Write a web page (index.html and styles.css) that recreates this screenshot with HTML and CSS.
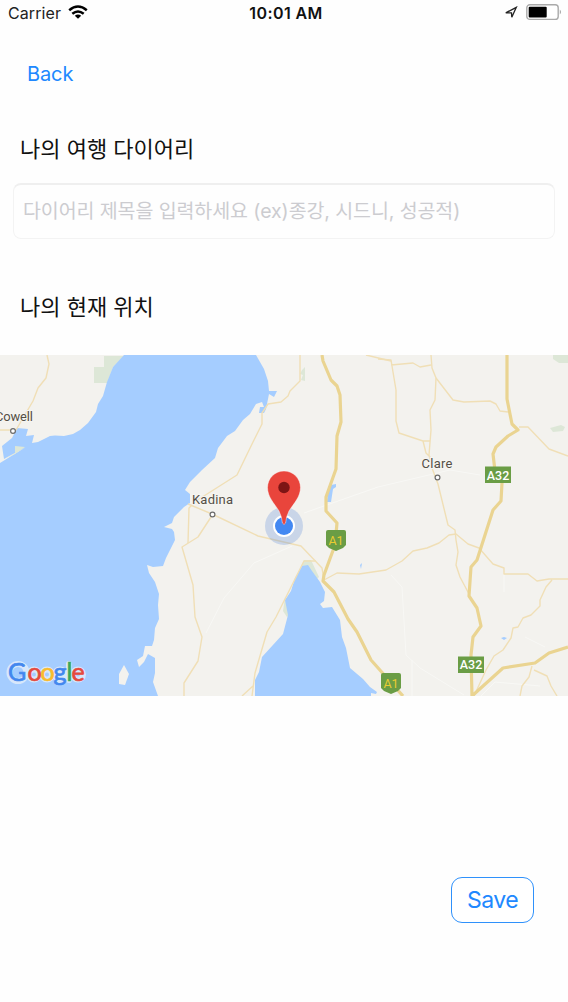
FILE: index.html
```html
<!DOCTYPE html>
<html lang="ko">
<head>
<meta charset="utf-8">
<title>나의 여행 다이어리</title>
<link rel="stylesheet" href="styles.css">
</head>
<body>
<main class="screen">
  <header class="status">
    <div class="status-left">
      <span class="carrier">Carrier</span>
      <svg class="wifi" viewBox="0 0 20 14" width="20" height="14">
        <g fill="none" stroke="#000" stroke-width="2.5">
          <path d="M1.2 5.2Q10-2.2 18.8 5.2"/>
          <path d="M4.300 8.800Q10 4.100 15.700 8.800"/>
        </g>
        <path d="M6.8 10.7Q10 8.200 13.200 10.700L10 13.700Z"/>
      </svg>
    </div>
    <span class="time">10:01 AM</span>
    <div class="status-right">
      <svg viewBox="0 0 14 14" width="14" height="14"><path d="M1.800 6.800 12.300 1.300 7.800 11.300 7.500 6.900Z" fill="none" stroke="#222" stroke-width="1.300"/></svg>
      <svg viewBox="0 0 36 17" width="36" height="17">
        <rect x=".8" y=".8" width="31.4" height="14.6" rx="3" fill="#fff" stroke="#aaa" stroke-width="1.4"/>
        <rect x="2.7" y="2.8" width="18" height="10.7" rx="1" fill="#000"/>
        <path d="M33.8 5.5Q36 8 33.8 10.5Z" fill="#999"/>
      </svg>
    </div>
  </header>
  <nav class="nav"><a class="back">Back</a></nav>
  <h1 class="label">나의 여행 다이어리</h1>
  <div class="field"><span class="placeholder">다이어리 제목을 입력하세요 (ex)종강, 시드니, 성공적)</span></div>
  <h2 class="label label-location">나의 현재 위치</h2>
  <svg class="map" viewBox="0 355 568 341" width="568" height="341">
    <rect class="land" y="355" width="568" height="341"/>
    <g class="park">
      <path d="M104 356H124L113 367 107 383H94V367H104Z"/>
      <path d="M302 370 305 367V381L301 380 303 375 300 374Z"/>
      <path d="M553 355H568V363H559L553 359Z"/>
      <path d="M550 428 561 425 565 427 563 431 553 432Z"/>
      <path d="M301 566 304 560 311 560 319 577 317 579 309 570Z"/>
      <path d="M285 597 290 614 287 617 283 611Z"/>
    </g>
    <g class="water">
      <path d="M124 355 113 367 107 382 103 396 98 404 96 412 88 423 80 430 73 434 64 436 55 435.500 50 436 38 442 32 443 34 435 26 436 28 429 17 428 12 438 2 446 4 459 15 453 26 447 0 463V696H158L153 682 155 673V658L148 654 144 662 139 667 137 660 143 656 145 646H152L154 640 155 628 159 619 158 605 159 594 155 582 149 573 147 565 153 567 163 566 166 558 170 550 175 540 174 532 172 529 164 527 172 523 174 517 184 507 190 503V494L185 490 190 482 202 470 215 458 218 448 227 436 235 431 243 420 250 414 256 404 262 402 264 407 260 407 259 413 264 413 266 409 269 394 274 397 277 391 269 391 268 381 264 369 256 355Z"/>
      <path d="M302 566 308 565 312 571 320 582 325 592 324 601 320 604 323 608 332 607 340 620 342 637 346 648 350 668 363 679 370 687 377 692 376 694 371 693V696H255V680L259 672 262 657 283 634 288 615 285 600 291 591 295 578Z"/>
      <path d="M331 485 336 484 336 487 333 489 331 502 327 502 328 492Z"/>
      <path d="M360 565 362 563 361 569Z"/>
      <path d="M501 638 504 637 507 638 504 640Z"/>
    </g>
    <path class="park" d="M15 446 25 447 15 454 4 459 15 453Z"/>
    <path class="land" d="M124 665 129 674 125 685 119 684V674Z"/>
    <g class="trail">
      <path d="M206 633 224 598 254 563 292 546M304 513 378 487 450 470 480 475M391 575 402 587 406 655 420 668 464 695M412 660V696M481 696 495 682 540 686M504 572V592M525 637 545 647"/>
    </g>
    <g class="road">
      <path d="M47 355 49 364 46 378 38 388 33 401 16 430H0"/>
      <path d="M300 355V381L290 391 288 396 281 402 268 404 262 413V424L253 442 237 475 196 501 189 508 188 543"/>
      <path d="M188 504 212 514 258 536 301 546 322 568 324 580M213 514 198 537 182 547 193 585 195 617 202 637 198 661 184 683V696"/>
      <path d="M316 561H304L289 591 276 617 267 632 255 673 252 696M253 686 242 696M366 355 391 361"/>
      <path d="M378 359 391 360 392 366 396 390V421L399 433 423 441 426 453 431 458M391 365 413 363 420 367 431 365M423 441H430M431 355 432 368 436 378 435 400 430 410 431 430 429 455 432 468 438 484 448 525 455 530 456 540 458 552 456 565 460 577 469 594"/>
      <path d="M436 378 453 400 464 402 490 401 496 404 500 411 508 412M519 427H528L549 449 568 456"/>
      <path d="M324 580 337 573 359 574 386 570 402 561 413 551 427 548 439 543 449 535 456 534 468 544 479 548 493 564 504 568V574H528L537 581 549 579 555 579 568 579M552 580 546 587 540 600V606L531 615 523 618 518 627 513 628 511 638 503 650 494 656 486 670 474 696M532 666 529 677 522 686 520 696M534 670 547 676 551 686 557 696"/>
    </g>
    <g class="highway">
      <path d="M322 355 323 361 331 380 337 386 340 395 341 422 337 436 336 469 326 497 326 511 337 523 335 545 324 575 323 581 334 592 348 619 357 632 371 660 403 696"/>
      <path d="M507 355V399L512 424 518 430 508 436 496 447 493 454 495 471 502 483 501 501 493 510 477 560 471 567 469 596 477 608 481 626 473 637 471 655 472 696 503 668 535 663 549 653 568 647"/>
    </g>
    <g class="shield">
      <rect x="485" y="466.500" width="26" height="16.500"/>
      <rect x="458" y="656.500" width="26" height="16.500"/>
      <path d="M328 530H344Q346 530 346 532V545L343 548 336 551 329 548 326 545V532Q326 530 328 530Z"/>
      <path d="M383 673H399Q401 673 401 675V688L398 691 391 694 384 691 381 688V675Q381 673 383 673Z"/>
    </g>
    <g class="shield-white"><text x="498" y="479.500">A32</text><text x="471" y="669">A32</text></g>
    <g class="shield-yellow"><text x="336" y="544.500">A1</text><text x="391" y="687.500">A1</text></g>
    <g class="town-dot"><circle cx="13" cy="431" r="2.400"/><circle cx="212.500" cy="514.500" r="2.400"/><circle cx="437.500" cy="477.500" r="2.400"/></g>
    <g class="town">
      <text x="-5" y="420.500" textLength="38">Cowell</text>
      <text x="192" y="504" textLength="41">Kadina</text>
      <text x="421.500" y="467.500" textLength="31">Clare</text>
    </g>
    <circle cx="284" cy="526" r="19" fill="#4b80d8" fill-opacity=".25"/>
    <circle cx="284" cy="526" r="11" fill="#fff"/>
    <circle cx="284" cy="526" r="9" fill="#4388f2"/>
    <path d="M284 471A16.500 16.500 0 0 0 267.500 487.500C267.500 497 274 503 279 511Q282 517 282.400 523Q284 526 285.600 523Q286 517 289 511C294 503 300.500 497 300.500 487.500A16.500 16.500 0 0 0 284 471Z" fill="#e9453c" stroke="#fff" stroke-opacity=".65" stroke-width=".7"/>
    <circle cx="284" cy="487.500" r="5.700" fill="#7d1515"/>
    <g class="google-halo"><circle cx="18" cy="672.500" r="8.500"/><circle cx="34" cy="674.500" r="5"/><circle cx="47" cy="674.500" r="5"/><path d="M60 674V680M69 664V680"/><circle cx="60" cy="674.500" r="5"/><circle cx="78" cy="674.500" r="5"/></g>
    <text class="google" x="8 27.500 40.500 53.500 66.600 71.500" y="681"><tspan class="g-blue">G</tspan><tspan class="g-red">o</tspan><tspan class="g-yellow">o</tspan><tspan class="g-blue">g</tspan><tspan class="g-green">l</tspan><tspan class="g-red">e</tspan></text>
  </svg>
  <footer class="actions"><button class="save">Save</button></footer>
</main>
</body>
</html>
```

FILE: styles.css
```css
* { box-sizing: border-box; }
body { margin: 0; background: #fff; font-family: Inter, "Noto Sans CJK KR", sans-serif; }
.screen { display: flex; flex-direction: column; width: 568px; height: 1002px; overflow: hidden; background: #fefefe; }
.status { display: grid; grid-template-columns: 1fr auto 1fr; align-items: center; height: 26px; padding: 0 6px 0 8px; font-size: 16px; line-height: 26px; color: #222; }
.status-left { display: flex; align-items: center; gap: 7px; }
.wifi { margin-top: -2px; }
.carrier { letter-spacing: .1px; }
.time { padding-left: 2px; font-weight: 600; letter-spacing: .4px; color: #111; }
.status-right { display: flex; justify-content: flex-end; align-items: center; gap: 8px; margin-top: -1px; }
.nav { height: 97px; padding: 34px 27px 0; }
.back { display: block; font-size: 20px; line-height: 28px; letter-spacing: -.1px; color: #2088ff; }
.label { margin: 0; padding-left: 20px; height: 60px; font-family: "Noto Sans CJK KR", sans-serif; font-size: 22px; font-weight: 400; line-height: 49px; color: #111; white-space: nowrap; }
.field { display: flex; align-items: center; height: 56px; margin: 0 13px; padding: 0 9px 1px; border: 1px solid #f3f3f3; border-top: 2px solid #efefef; border-radius: 8px; }
.placeholder { font-family: Inter, "Noto Sans CJK KR", sans-serif; font-size: 19.5px; line-height: 30px; letter-spacing: -.1px; color: #ccccd0; white-space: nowrap; }
.label-location { height: 74px; margin-top: 42px; }
.map { display: block; flex: none; font-family: Roboto, sans-serif; }
.land { fill: #f3f2ee; }
.park { fill: #dde7d7; }
.water { fill: #a5cdff; }
.trail { fill: none; stroke: #f8f8f5; stroke-width: 1; }
.road { fill: none; stroke: #f0dfb6; stroke-width: 1.4; stroke-linejoin: round; }
.highway { fill: none; stroke: #ead491; stroke-width: 3.2; stroke-linejoin: round; }
.shield { fill: #6a9d45; }
.shield-white, .shield-yellow { font-size: 12.5px; font-weight: 500; text-anchor: middle; fill: #fff; }
.shield-yellow { fill: #e8cb32; font-weight: 400; }
.town { font-size: 13px; fill: #544f46; stroke: #f6f5f1; stroke-width: 2px; paint-order: stroke; }
.town-dot { fill: #fff; stroke: #6b6b6b; stroke-width: 1.2; }
.google-halo { fill: none; stroke: #d7e7fb; stroke-width: 6px; stroke-linecap: round; }
.google { font-family: Lato, sans-serif; font-size: 25px; font-weight: 400; stroke-width: .7px; }
.g-blue { fill: #4387ee; stroke: #4387ee; }
.g-red { fill: #e54a3d; stroke: #e54a3d; }
.g-yellow { fill: #f9bb2d; stroke: #f9bb2d; }
.g-green { fill: #3aa75a; stroke: #3aa75a; }
.actions { display: flex; justify-content: flex-end; padding: 181px 34px 0 0; }
.save { width: 83px; height: 46px; padding: 0; border: 1.5px solid #2f91fb; border-radius: 11px; background: #fff; font-family: Inter, sans-serif; font-size: 23px; letter-spacing: -.5px; color: #2088ff; }
```
